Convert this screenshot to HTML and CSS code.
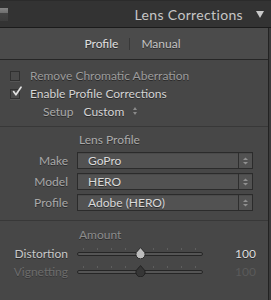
FILE: index.html
```html
<!DOCTYPE html>
<html>
<head>
<meta charset="utf-8">
<link rel="stylesheet" href="styles.css">
</head>
<body>
<div class="app">
  <div class="header">
    <span class="grip"></span>
    <span class="title">Lens Corrections</span>
    <svg class="collapse" width="8" height="7" viewBox="0 0 8 7"><polygon points="0,0 8,0 4,7" fill="#c9c9c9"/></svg>
  </div>
  <div class="main">
    <div class="tabs">
      <span class="tab active">Profile</span>
      <span class="tab-sep"></span>
      <span class="tab">Manual</span>
    </div>
    <div class="section checks">
      <div class="check disabled"><span class="box"></span><span>Remove Chromatic Aberration</span></div>
      <div class="check"><span class="box"><svg class="tick" width="11" height="11" viewBox="0 0 11 11"><path d="M2.6 5.6 L4.9 8.8 L10 1.2" fill="none" stroke="#e2e2e2" stroke-width="1.7" stroke-linecap="round" stroke-linejoin="round"/></svg></span><span>Enable Profile Corrections</span></div>
      <div class="setup">
        <span class="setup-label">Setup</span>
        <span class="setup-value">Custom</span>
        <svg class="updown" width="4" height="8" viewBox="0 0 4 8"><polygon points="0,3 4,3 2,0" fill="#8a8a8a"/><polygon points="0,5 4,5 2,8" fill="#8a8a8a"/></svg>
      </div>
    </div>
    <div class="section lens">
      <div class="group-title">Lens Profile</div>
      <div class="form">
        <span class="flabel">Make</span>
        <div class="select"><span class="sel-text">GoPro</span><span class="sel-arrows"><svg width="5" height="8" viewBox="0 0 5 8"><polygon points="0,3 5,3 2.5,0.5" fill="#909090"/><polygon points="0,5 5,5 2.5,7.5" fill="#909090"/></svg></span></div>
        <span class="flabel">Model</span>
        <div class="select"><span class="sel-text">HERO</span><span class="sel-arrows"><svg width="5" height="8" viewBox="0 0 5 8"><polygon points="0,3 5,3 2.5,0.5" fill="#909090"/><polygon points="0,5 5,5 2.5,7.5" fill="#909090"/></svg></span></div>
        <span class="flabel">Profile</span>
        <div class="select"><span class="sel-text">Adobe (HERO)</span><span class="sel-arrows"><svg width="5" height="8" viewBox="0 0 5 8"><polygon points="0,3 5,3 2.5,0.5" fill="#909090"/><polygon points="0,5 5,5 2.5,7.5" fill="#909090"/></svg></span></div>
      </div>
    </div>
    <div class="section amount">
      <div class="group-title dim">Amount</div>
      <div class="sliders">
        <span class="slabel">Distortion</span>
        <div class="slider">
          <span class="ticks"></span>
          <span class="track"></span>
          <svg class="thumb" width="11" height="12" viewBox="0 0 11 12"><path d="M5.5 0.6 L9.7 5.4 A4.6 4.6 0 1 1 1.3 5.4 Z" fill="#bcbcbc" stroke="#262626" stroke-width="1"/></svg>
        </div>
        <span class="svalue">100</span>
        <span class="slabel off">Vignetting</span>
        <div class="slider">
          <span class="ticks"></span>
          <span class="track"></span>
          <svg class="thumb" width="11" height="12" viewBox="0 0 11 12"><path d="M5.5 0.6 L9.7 5.4 A4.6 4.6 0 1 1 1.3 5.4 Z" fill="#363636" stroke="#222" stroke-width="1"/></svg>
        </div>
        <span class="svalue off">100</span>
      </div>
    </div>
  </div>
</div>
</body>
</html>
```
FILE: styles.css
```css
* { box-sizing: border-box; }
html, body { margin: 0; padding: 0; }
body {
  width: 271px;
  height: 300px;
  overflow: hidden;
  background: #3b3b3b;
  font-family: Lato, "Open Sans", sans-serif;
  font-size: 12px;
}
.app {
  width: 271px;
  height: 300px;
  display: flex;
  flex-direction: column;
  background: #3b3b3b;
}
.header {
  height: 28px;
  flex: none;
  background: #333333;
  border-top: 1px solid #2b2b2b;
  border-bottom: 1px solid #1b1b1b;
  display: flex;
  align-items: center;
  padding-right: 7px;
}
.grip {
  width: 8px;
  height: 13px;
  margin-top: 1px;
  background: linear-gradient(#858585 0, #6e6e6e 38%, #434343 40%, #3d3d3d 100%);
}
.title {
  margin-left: auto;
  color: #c6c6c6;
  font-size: 14px;
  letter-spacing: 0.35px;
}
.collapse {
  margin-left: 13px;
  margin-top: 1px;
}
.main {
  width: 269px;
  flex: 1;
  background: #474747;
  border-right: 1px solid #222;
  display: flex;
  flex-direction: column;
}
.tabs {
  height: 32px;
  flex: none;
  background: #4b4b4b;
  border-bottom: 1px solid #262626;
  display: flex;
  align-items: center;
  justify-content: center;
  gap: 11px;
  padding-right: 3px;
}
.tab {
  color: #c4c4c4;
  text-shadow: 0 1px 0 rgba(0,0,0,0.45);
}
.tab.active { color: #e0e0e0; }
.tab-sep {
  width: 1px;
  height: 12px;
  background: #383838;
}
.section {
  display: flex;
  flex-direction: column;
}
.checks {
  padding: 6px 0 6px 10px;
}
.check {
  height: 18px;
  display: flex;
  align-items: center;
  gap: 10px;
  color: #d4d4d4;
  text-shadow: 0 1px 0 rgba(0,0,0,0.45);
}
.check.disabled { color: #9c9c9c; }
.box {
  position: relative;
  width: 10px;
  height: 10px;
  border: 1px solid #303030;
  background: #4a4a4a;
  box-shadow: 0 1px 0 #555;
  margin-top: 1px;
}
.tick {
  position: absolute;
  left: 0px;
  top: -4px;
}
.setup {
  height: 18px;
  display: flex;
  align-items: center;
  padding-left: 33px;
}
.setup-label { color: #a9a9a9; text-shadow: 0 1px 0 rgba(0,0,0,0.4); }
.setup-value { color: #d4d4d4; margin-left: 10px; text-shadow: 0 1px 0 rgba(0,0,0,0.45); }
.updown { margin-left: 9px; }
.lens {
  border-top: 1px solid #383838;
  padding: 4px 0 9px 0;
}
.group-title {
  height: 18px;
  line-height: 18px;
  padding-left: 79px;
  color: #ababab;
  text-shadow: 0 1px 0 rgba(0,0,0,0.4);
}
.group-title.dim { color: #8c8c8c; }
.form {
  margin-top: 3px;
  display: grid;
  grid-template-columns: 68px 176px;
  grid-auto-rows: 17px;
  column-gap: 9px;
  row-gap: 4px;
  align-items: center;
}
.flabel {
  text-align: right;
  color: #a9a9a9;
  text-shadow: 0 1px 0 rgba(0,0,0,0.4);
}
.select {
  height: 17px;
  display: flex;
  border: 1px solid #2b2b2b;
  background: #525252;
  box-shadow: inset 0 1px 0 #4a4a4a;
}
.sel-text {
  flex: 1;
  padding-left: 10px;
  line-height: 15px;
  color: #dadada;
  text-shadow: 0 1px 0 rgba(0,0,0,0.45);
}
.sel-arrows {
  width: 14px;
  border-left: 1px solid #2e2e2e;
  display: flex;
  align-items: center;
  justify-content: center;
}
.amount {
  border-top: 1px solid #383838;
  padding-top: 5px;
}
.sliders {
  display: grid;
  grid-template-columns: 68px 126px 1fr;
  grid-auto-rows: 18px;
  column-gap: 9px;
  padding-right: 12px;
  align-items: center;
}
.slabel {
  text-align: right;
  color: #c9c9c9;
  text-shadow: 0 1px 0 rgba(0,0,0,0.45);
}
.slabel.off { color: #6c6c6c; text-shadow: 0 1px 0 rgba(0,0,0,0.25); }
.svalue {
  text-align: right;
  color: #dedede;
  text-shadow: 0 1px 0 rgba(0,0,0,0.45);
}
.svalue.off { color: #5a5a5a; text-shadow: none; }
.slider {
  position: relative;
  height: 18px;
}
.ticks {
  position: absolute;
  left: 6px;
  top: 4px;
  width: 113px;
  height: 2px;
  background: repeating-linear-gradient(to right, #5e5e5e 0 1px, transparent 1px 14px);
}
.track {
  position: absolute;
  left: 0;
  right: 0;
  top: 8px;
  height: 4px;
  border: 1px solid #262626;
  border-radius: 2px;
  background: #555;
}
.thumb {
  position: absolute;
  left: 58px;
  top: 3px;
}
```
